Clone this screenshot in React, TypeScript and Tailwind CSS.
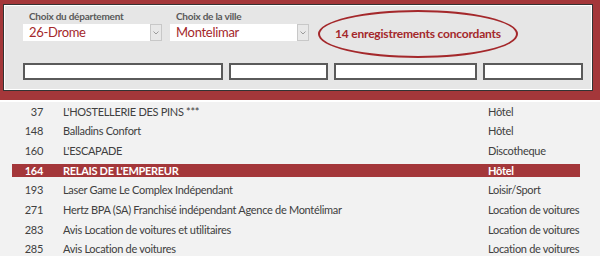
import React from 'react';

type Row = { id: number; name: string; kind: string; selected?: boolean };

const rows: Row[] = [
  { id: 37, name: "L'HOSTELLERIE DES PINS ***", kind: 'Hôtel' },
  { id: 148, name: 'Balladins Confort', kind: 'Hôtel' },
  { id: 160, name: "L'ESCAPADE", kind: 'Discotheque' },
  { id: 164, name: "RELAIS DE L'EMPEREUR", kind: 'Hôtel', selected: true },
  { id: 193, name: 'Laser Game Le Complex Indépendant', kind: 'Loisir/Sport' },
  { id: 271, name: 'Hertz BPA (SA) Franchisé indépendant Agence de Montélimar', kind: 'Location de voitures' },
  { id: 283, name: 'Avis Location de voitures et utilitaires', kind: 'Location de voitures' },
  { id: 285, name: 'Avis Location de voitures', kind: 'Location de voitures' },
];

function Combo({ label, value, width }: { label: string; value: string; width: string }) {
  return (
    <div className="flex flex-col">
      <span className="pl-[6px] text-[10px] font-bold leading-[13px] tracking-[-0.25px] text-[#595959]">{label}</span>
      <div className={`mt-[1px] flex h-[17px] items-stretch bg-white ${width}`}>
        <span className="flex-1 pl-[6px] text-[13px] leading-[17px] tracking-[-0.3px] text-[#a4282b]">{value}</span>
        <span className="flex w-[12px] items-center justify-center border border-[#c8c8c8] bg-[#e8e8e8]">
          <svg width="6" height="4" viewBox="0 0 6 4">
            <path d="M0.5 0.5 L3 3 L5.5 0.5" fill="none" stroke="#9a9a9a" strokeWidth="1" />
          </svg>
        </span>
      </div>
    </div>
  );
}

export default function App() {
  return (
    <div className="h-[256px] w-[600px] overflow-hidden bg-[#f2f2f2] font-['Lato',sans-serif]">
      {/* bandeau rouge du formulaire */}
      <div className="border-b-[2px] border-white bg-[#a4373a] pb-[9px] pl-[3px] pr-[7px] pt-[4px]">
        <div className="h-[87px] border border-[#333] bg-[#e6e6e6] pl-[19px] pt-[5px] outline outline-1 -outline-offset-2 outline-white">
          <div className="flex items-start">
            <div className="flex gap-[8px]">
              <Combo label="Choix du département" value="26-Drome" width="w-[139px]" />
              <Combo label="Choix de la ville" value="Montelimar" width="w-[139px]" />
            </div>
            <div className="ml-[9px] flex h-[48px] w-[200px] items-center justify-center rounded-[50%] border-2 border-[#a4282b]">
              <span className="whitespace-nowrap text-[12px] font-bold tracking-[-0.2px] text-[#a4282b]">
                14 enregistrements concordants
              </span>
            </div>
          </div>
          <div className="mt-[5px] flex gap-[6px]">
            <div className="h-[17px] w-[200px] border-2 border-[#5a5a5a] bg-white" />
            <div className="h-[17px] w-[99px] border-2 border-[#5a5a5a] bg-white" />
            <div className="h-[17px] w-[143px] border-2 border-[#5a5a5a] bg-white" />
            <div className="h-[17px] w-[100px] border-2 border-[#5a5a5a] bg-white" />
          </div>
        </div>
      </div>

      {/* liste des enregistrements */}
      <div>
        {rows.map((r) => (
          <div key={r.id} className="flex h-[19.7px] items-center">
            <div
              className={`ml-[12px] flex h-[13px] w-[568px] items-center whitespace-nowrap text-[11px] tracking-[-0.3px] ${
                r.selected ? 'bg-[#a4373a] font-bold text-white' : 'text-[#404040]'
              }`}
            >
              <span className="w-[31px] text-right">{r.id}</span>
              <span className="ml-[20px] w-[425px]">{r.name}</span>
              <span>{r.kind}</span>
            </div>
          </div>
        ))}
      </div>
    </div>
  );
}
